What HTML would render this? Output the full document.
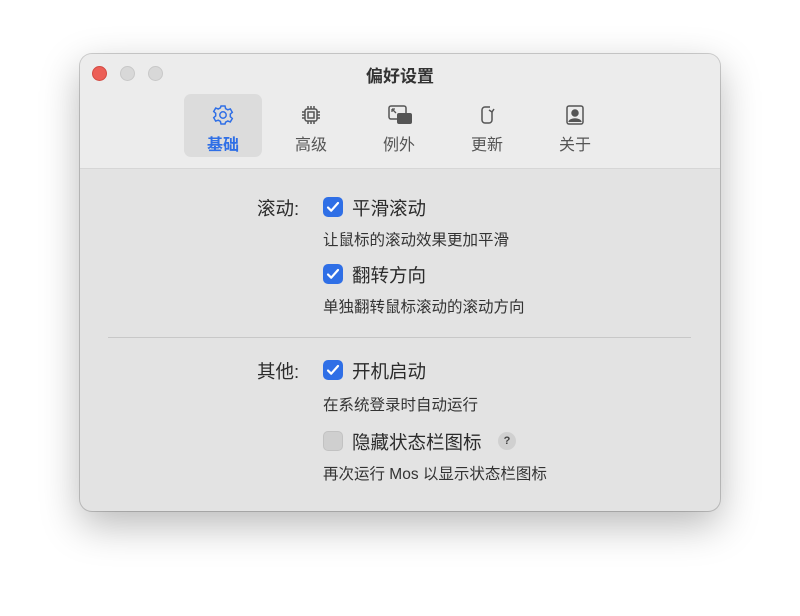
<!DOCTYPE html>
<html><head><meta charset="utf-8"><style>
body{margin:0;width:800px;height:616px;background:#fff;position:relative;font-family:"Liberation Sans","Noto Sans CJK SC",sans-serif;overflow:hidden}
.win{position:absolute;left:80px;top:54px;width:640px;height:457px;border-radius:12px;background:#e3e3e3;box-shadow:0 14px 40px rgba(0,0,0,.28),0 0 0 1px rgba(0,0,0,.18);overflow:hidden}
.tb{position:absolute;left:0;top:0;width:640px;height:114px;background:#ececec;border-bottom:1px solid #d6d6d6}
.dot{position:absolute;top:12px;width:15px;height:15px;border-radius:50%;background:#d8d8d8;border:1px solid #c8c8c8;box-sizing:border-box}
.title{position:absolute;top:8px;left:0;width:640px;text-align:center;font-size:17px;font-weight:bold;color:#333}
.tab{position:absolute;top:40px;width:78px;height:63px;text-align:center;font-size:16px;color:#555}
.tab .lb{position:absolute;top:37px;width:100%}
.tab svg{position:absolute;top:10px;left:28px}
.t{position:absolute;color:#2b2b2b;font-size:18.5px;white-space:nowrap}
.d{position:absolute;color:#333;font-size:15.5px;white-space:nowrap}
.cb{position:absolute;width:20px;height:20px;border-radius:5px;background:#2f6fe6}
.cb svg{position:absolute;left:3px;top:3px}
</style></head><body>
<div class="win">
<div class="tb">
<div class="dot" style="left:12px;background:#ec5f57;border-color:#d34a42"></div>
<div class="dot" style="left:40px"></div>
<div class="dot" style="left:68px"></div>
<div class="title">偏好设置</div>
<div class="tab" style="left:104px;background:#dcdcdc;border-radius:7px;color:#2f6fe6;font-weight:bold">
<svg width="22" height="22" viewBox="0 0 22 22" fill="none" stroke="#2f6fe6" stroke-width="1.5"><path d="M9 2h4l.6 2.6 2.2 1.2 2.5-.9 2 3.4-2 1.8v2.6l2 1.8-2 3.4-2.5-.9-2.2 1.2L13 20H9l-.6-2.6-2.2-1.2-2.5.9-2-3.4 2-1.8V9.3l-2-1.8 2-3.4 2.5.9 2.2-1.2z"/><circle cx="11" cy="11" r="3.2"/></svg>
<div class="lb">基础</div></div>
<div class="tab" style="left:192px">
<svg width="22" height="22" viewBox="0 0 22 22" fill="none" stroke="#555" stroke-width="1.5"><rect x="5" y="5" width="12" height="12" rx="2"/><rect x="8" y="8" width="6" height="6"/><path d="M8 2v3M11 2v3M14 2v3M8 17v3M11 17v3M14 17v3M2 8h3M2 11h3M2 14h3M17 8h3M17 11h3M17 14h3"/></svg>
<div class="lb">高级</div></div>
<div class="tab" style="left:280px">
<svg width="26" height="22" viewBox="0 0 26 22"><rect x="1" y="2" width="17" height="13" rx="2" fill="none" stroke="#555" stroke-width="1.5"/><rect x="9" y="9" width="15" height="11" rx="2" fill="#555"/><path d="M4 5l4 4M4 5h3M4 5v3" stroke="#555" stroke-width="1.3" fill="none"/></svg>
<div class="lb">例外</div></div>
<div class="tab" style="left:368px">
<svg width="22" height="22" viewBox="0 0 22 22" fill="none" stroke="#555" stroke-width="1.5"><path d="M14 3H9a3 3 0 0 0-3 3v10a3 3 0 0 0 3 3h4a3 3 0 0 0 3-3V8"/><path d="M13 6l3 2 2-3" /></svg>
<div class="lb">更新</div></div>
<div class="tab" style="left:456px">
<svg width="22" height="22" viewBox="0 0 22 22" fill="none" stroke="#555" stroke-width="1.5"><rect x="3" y="2" width="16" height="18" rx="2"/><circle cx="11" cy="9" r="3" fill="#555"/><path d="M5 18c1-4 11-4 12 0" fill="#555"/></svg>
<div class="lb">关于</div></div>
</div>
<div class="t" style="left:177px;top:141px">滚动:</div>
<div class="cb" style="left:243px;top:143px"><svg width="14" height="14" viewBox="0 0 14 14"><path d="M2 7.5l3.2 3.2L12 3" stroke="#fff" stroke-width="2.2" fill="none" stroke-linecap="round" stroke-linejoin="round"/></svg></div>
<div class="t" style="left:272px;top:141px">平滑滚动</div>
<div class="d" style="left:243px;top:174px">让鼠标的滚动效果更加平滑</div>
<div class="cb" style="left:243px;top:210px"><svg width="14" height="14" viewBox="0 0 14 14"><path d="M2 7.5l3.2 3.2L12 3" stroke="#fff" stroke-width="2.2" fill="none" stroke-linecap="round" stroke-linejoin="round"/></svg></div>
<div class="t" style="left:272px;top:208px">翻转方向</div>
<div class="d" style="left:243px;top:241px">单独翻转鼠标滚动的滚动方向</div>
<div style="position:absolute;left:28px;top:283px;width:583px;height:1px;background:#c8c8c8"></div>
<div class="t" style="left:177px;top:304px">其他:</div>
<div class="cb" style="left:243px;top:306px"><svg width="14" height="14" viewBox="0 0 14 14"><path d="M2 7.5l3.2 3.2L12 3" stroke="#fff" stroke-width="2.2" fill="none" stroke-linecap="round" stroke-linejoin="round"/></svg></div>
<div class="t" style="left:272px;top:304px">开机启动</div>
<div class="d" style="left:243px;top:339px">在系统登录时自动运行</div>
<div class="cb" style="left:243px;top:377px;background:#cfcfcf;border:1px solid #c2c2c2;box-sizing:border-box"></div>
<div class="t" style="left:272px;top:375px">隐藏状态栏图标</div>
<div style="position:absolute;left:418px;top:378px;width:18px;height:18px;border-radius:50%;background:#d0d0d0;font-size:11px;font-weight:bold;text-align:center;line-height:18px;color:#444">?</div>
<div class="d" style="left:243px;top:408px">再次运行 Mos 以显示状态栏图标</div>
</div>
</body></html>
